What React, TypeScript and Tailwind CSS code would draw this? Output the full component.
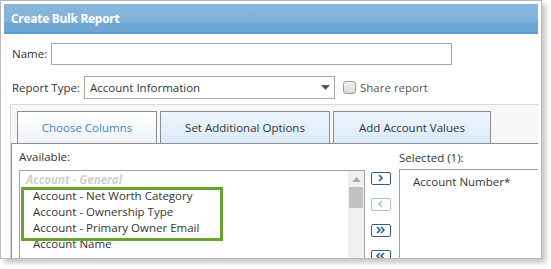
import React from "react";

const items = [
  "Account - Net Worth Category",
  "Account - Ownership Type",
  "Account - Primary Owner Email",
  "Account Name",
];

function MoveButton({
  glyph,
  disabled,
}: {
  glyph: "right" | "left" | "dright" | "dleft";
  disabled?: boolean;
}) {
  const stroke = disabled ? "#a9bdd3" : "#2f5d8c";
  const paths: Record<string, string> = {
    right: "M8.5 3.5 L11.5 6.5 L8.5 9.5",
    left: "M11.5 3.5 L8.5 6.5 L11.5 9.5",
    dright: "M6.5 3.5 L9.5 6.5 L6.5 9.5 M10.5 3.5 L13.5 6.5 L10.5 9.5",
    dleft: "M9.5 3.5 L6.5 6.5 L9.5 9.5 M13.5 3.5 L10.5 6.5 L13.5 9.5",
  };
  return (
    <div
      className={`h-[13px] w-[20px] rounded-[2px] border-[1.5px] bg-white ${
        disabled ? "border-[#a9bdd3]" : "border-[#2f5d8c]"
      }`}
    >
      <svg width="17" height="10" viewBox="1.5 1.5 17 10" className="block">
        <path d={paths[glyph]} fill="none" stroke={stroke} strokeWidth="1.6" />
      </svg>
    </div>
  );
}

export default function App() {
  return (
    <div
      className="relative h-[269px] w-[551px] overflow-hidden bg-white text-[11.5px] text-[#333]"
      style={{ fontFamily: '"Open Sans", "Noto Sans", sans-serif' }}
    >
      <div className="h-[259px] w-[542px] overflow-hidden border border-[#b9b9b9] bg-white p-[3px] shadow-[4px_4px_5px_rgba(0,0,0,0.22)]">
        {/* header */}
        <div className="relative h-[30px] overflow-hidden border-b-2 border-[#5a9bd1] bg-gradient-to-b from-[#8ab8dc] to-[#7aaed8]">
          <div className="absolute inset-x-0 bottom-0 h-[10px] bg-[#6ea6d4]" />
          <span className="relative block pl-[7px] pt-[6px] text-[12px] font-bold tracking-[-0.3px] text-white">
            Create Bulk Report
          </span>
        </div>

        {/* form rows */}
        <div className="flex flex-col gap-[11px] pl-[8px] pt-[9px]">
          <div className="flex h-[22px] items-center">
            <span className="w-[39px]">Name:</span>
            <div className="h-[22px] w-[401px] border border-[#a8a8a8] bg-white" />
          </div>
          <div className="flex h-[23px] items-center">
            <span className="w-[72px] whitespace-nowrap">Report Type:</span>
            <div className="flex h-[23px] w-[251px] items-center justify-between border border-[#a8a8a8] bg-white pl-[5px] pr-[4px]">
              <span className="text-[#333]">Account Information</span>
              <svg width="9" height="5" viewBox="0 0 9 5">
                <path d="M0 0 H9 L4.5 5 Z" fill="#555" />
              </svg>
            </div>
            <div className="ml-[8px] h-[13px] w-[13px] rounded-[3px] border border-[#9a9a9a] bg-gradient-to-b from-[#f4f4f4] to-[#d8d8d8]" />
            <span className="ml-[4px] text-[#555]">Share report</span>
          </div>
        </div>

        {/* tab panel */}
        <div className="ml-[6px] mt-[5px] h-[200px] border-l border-t border-[#d9d9d9] bg-[#f7f7f7]">
          <div className="flex gap-[3px] pl-[6px] pt-[6px]">
            <div className="flex h-[32px] w-[140px] items-center justify-center border border-b-0 border-[#8c8c8c] bg-gradient-to-b from-white to-[#eef2f5] text-[#3f86bb]">
              Choose Columns
            </div>
            <div className="flex h-[32px] w-[170px] items-center justify-center border border-b-0 border-[#8c8c8c] bg-gradient-to-b from-[#edf5fd] to-[#dbeaf8]">
              Set Additional Options
            </div>
            <div className="flex h-[32px] w-[158px] items-center justify-center border border-b-0 border-[#8c8c8c] bg-gradient-to-b from-[#edf5fd] to-[#dbeaf8]">
              Add Account Values
            </div>
          </div>

          <div className="flex h-[120px] border-l-[1px] border-t border-[#8f8f8f] bg-white pl-[7px]">
            {/* available */}
            <div className="flex flex-col">
              <div className="flex h-[28px] items-center">Available:</div>
              <div className="relative flex h-[100px] w-[346px] border border-[#a0a0a0] bg-white">
                <div className="flex-1 pt-[1px]">
                  <div className="flex h-[16px] items-center pl-[6px] font-bold italic text-[#cfcfcf]">
                    Account - General
                  </div>
                  {items.map((it) => (
                    <div key={it} className="flex h-[16px] items-center pl-[13px]">
                      {it}
                    </div>
                  ))}
                  <div className="absolute left-[1px] top-[16px] h-[54px] w-[202px] border-[3px] border-[#6aa22e]" />
                </div>
                <div className="flex w-[16px] flex-col items-center bg-[#f0f0f0]">
                  <svg width="9" height="5" viewBox="0 0 9 5" className="mt-[6px]">
                    <path d="M0 5 L4.5 0 L9 5 Z" fill="#a6a6a6" />
                  </svg>
                  <div className="mt-[5px] h-[21px] w-[14px] bg-[#c1c1c1]" />
                </div>
              </div>
            </div>

            {/* buttons */}
            <div className="flex w-[34px] flex-col items-start gap-[13px] pl-[6px] pt-[28px]">
              <MoveButton glyph="right" />
              <MoveButton glyph="left" disabled />
              <MoveButton glyph="dright" />
              <MoveButton glyph="dleft" />
            </div>

            {/* selected */}
            <div className="flex flex-1 flex-col">
              <div className="flex h-[27px] items-center pt-[2px]">Selected (1):</div>
              <div className="h-[100px] border border-r-0 border-[#a0a0a0] bg-white pl-[13px] pt-[3px]">
                Account Number*
              </div>
            </div>
          </div>
        </div>
      </div>
    </div>
  );
}
